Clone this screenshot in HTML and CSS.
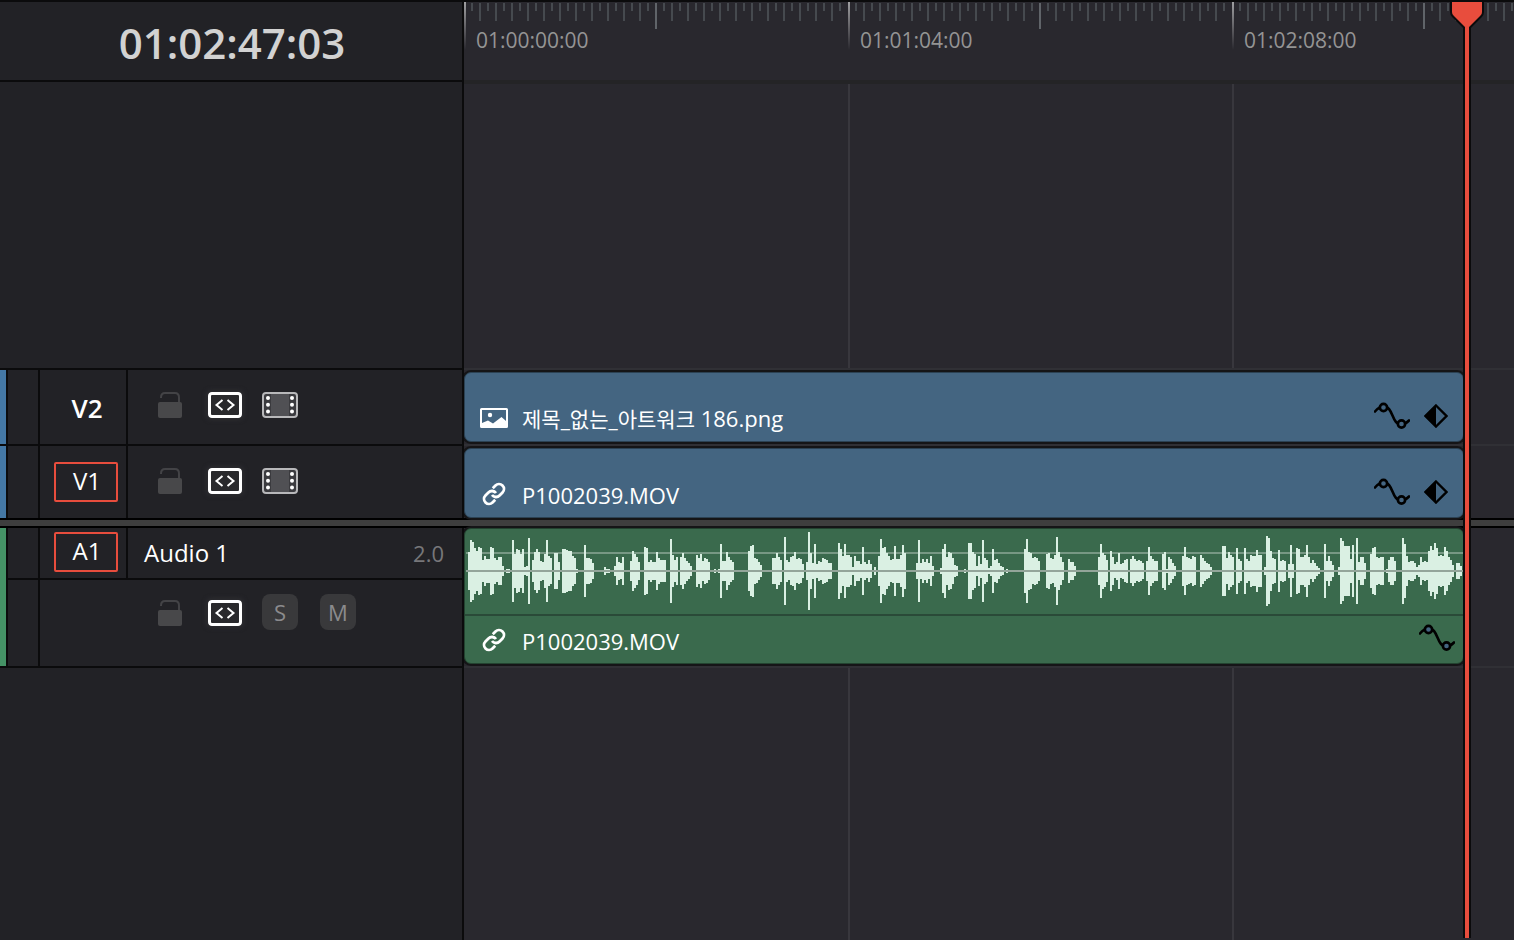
FILE: index.html
```
<!DOCTYPE html>
<html lang="ko">
  <head>
    <meta charset="UTF-8" />
    <meta name="viewport" content="width=device-width, initial-scale=1.0" />
    <title>Timeline</title>
    <link rel="stylesheet" href="styles.css">
  </head>
  <body>
    <!-- shared icons -->
    <svg class="icon-defs" width="0" height="0" aria-hidden="true">
      <symbol id="icon-lock" viewBox="0 0 24 26">
        <path d="M3 6V5.5C3 3 4.500 1 7 1H17C19.500 1 21 3 21 5.500V11" fill="none" stroke="#434346" stroke-width="2" />
        <rect x="0" y="10" width="24" height="16" rx="2" fill="#48484a" />
      </symbol>
      <symbol id="icon-select" viewBox="0 0 34 26">
        <rect x="1.500" y="1.500" width="31" height="23" rx="2.500" fill="#29292c" stroke="#fff" stroke-width="3" />
        <path d="M14.500 8L8.500 13L14.500 18M19.500 8L25.500 13L19.500 18" fill="none" stroke="#fff" stroke-width="2" />
      </symbol>
      <symbol id="icon-film" viewBox="0 0 36 26">
        <rect x="1" y="1" width="34" height="24" rx="3" fill="#3b3b3f" stroke="#b8b8ba" stroke-width="2" />
        <rect x="9" y="2" width="18" height="22" fill="#505054" />
        <g fill="#fff">
          <circle cx="6" cy="6" r="2" /><circle cx="6" cy="12.800" r="2" /><circle cx="6" cy="19.600" r="2" />
          <circle cx="30" cy="6" r="2" /><circle cx="30" cy="12.800" r="2" /><circle cx="30" cy="19.600" r="2" />
        </g>
      </symbol>
      <symbol id="icon-image" viewBox="0 0 28 20">
        <path fill="#fff" fill-rule="evenodd" d="M1.500 0H26.500Q28 0 28 1.500V18.500Q28 20 26.500 20H1.500Q0 20 0 18.500V1.500Q0 0 1.500 0ZM2 2V15L8 12.500L13 15.500L21.500 9L26 13V2Z" />
        <circle cx="10" cy="7" r="2.200" fill="#fff" />
      </symbol>
      <symbol id="icon-link" viewBox="0 0 24 24">
        <g fill="none" stroke="#fff" stroke-width="2.800">
          <path d="M10 13a5 5 0 0 0 7.540 .540l3-3a5 5 0 0 0-7.070-7.070l-2.700 2.700" />
          <path d="M14 11a5 5 0 0 0-7.540-.540l-3 3a5 5 0 0 0 7.070 7.070l2.700-2.700" />
        </g>
      </symbol>
      <symbol id="icon-curve" viewBox="0 0 36 28">
        <path d="M1 9.500C4 6 6 4.500 9.500 4.500C20 4.500 17 22.500 27.500 22.500C31 22.500 33 20.500 35 18.500" fill="none" stroke="#000" stroke-width="2.600" stroke-linecap="round" />
        <circle class="knot" cx="9.500" cy="5.500" r="3.600" stroke="#000" stroke-width="2.600" />
        <circle class="knot" cx="27.500" cy="22" r="3.600" stroke="#000" stroke-width="2.600" />
      </symbol>
      <symbol id="icon-keyframe" viewBox="0 0 24 24">
        <path d="M12 1.500L22.500 12L12 22.500L1.500 12Z" fill="none" stroke="#000" stroke-width="2.400" />
        <path d="M12 0.500V23.500L0.500 12Z" fill="#000" />
      </symbol>
    </svg>

    <main class="timeline">
      <header class="row header-row">
        <div class="panel timecode">01:02:47:03</div>
        <div class="ruler">
          <span>01:00:00:00</span>
          <span>01:01:04:00</span>
          <span>01:02:08:00</span>
        </div>
      </header>

      <div class="row spacer-top">
        <div class="panel"></div>
        <div class="lane-empty"></div>
      </div>

      <section class="row track track-v2">
        <div class="panel track-head video">
          <div class="gutter"></div>
          <div class="track-id"><strong>V2</strong></div>
          <div class="controls">
            <button class="icon-btn lock" aria-label="Lock V2"><svg width="24" height="26"><use href="#icon-lock" /></svg></button>
            <button class="icon-btn select" aria-label="Auto select V2"><svg width="34" height="26"><use href="#icon-select" /></svg></button>
            <button class="icon-btn" aria-label="Enable V2"><svg width="36" height="26"><use href="#icon-film" /></svg></button>
          </div>
        </div>
        <div class="lane">
          <div class="clip clip-video">
            <svg class="clip-icon" width="28" height="20"><use href="#icon-image" /></svg>
            <span class="clip-name"><span class="hangul">제목_없는_아트워크</span> 186.png</span>
            <button class="icon-btn" aria-label="Curves"><svg width="36" height="28"><use href="#icon-curve" /></svg></button>
            <button class="icon-btn" aria-label="Keyframes"><svg width="24" height="24"><use href="#icon-keyframe" /></svg></button>
          </div>
        </div>
      </section>

      <section class="row track track-v1">
        <div class="panel track-head video">
          <div class="gutter"></div>
          <div class="track-id"><button class="dest">V1</button></div>
          <div class="controls">
            <button class="icon-btn lock" aria-label="Lock V1"><svg width="24" height="26"><use href="#icon-lock" /></svg></button>
            <button class="icon-btn select" aria-label="Auto select V1"><svg width="34" height="26"><use href="#icon-select" /></svg></button>
            <button class="icon-btn" aria-label="Enable V1"><svg width="36" height="26"><use href="#icon-film" /></svg></button>
          </div>
        </div>
        <div class="lane">
          <div class="clip clip-video">
            <svg class="clip-icon" width="28" height="24"><use href="#icon-link" /></svg>
            <span class="clip-name">P1002039.MOV</span>
            <button class="icon-btn" aria-label="Curves"><svg width="36" height="28"><use href="#icon-curve" /></svg></button>
            <button class="icon-btn" aria-label="Keyframes"><svg width="24" height="24"><use href="#icon-keyframe" /></svg></button>
          </div>
        </div>
      </section>

      <div class="splitter"></div>

      <section class="row track track-a1">
        <div class="panel track-head audio">
          <div class="gutter"></div>
          <div class="track-id"><button class="dest">A1</button></div>
          <div class="track-name"><span>Audio 1</span><span class="channels">2.0</span></div>
          <div class="gutter"></div>
          <div class="controls">
            <button class="icon-btn lock" aria-label="Lock A1"><svg width="24" height="26"><use href="#icon-lock" /></svg></button>
            <button class="icon-btn select" aria-label="Auto select A1"><svg width="34" height="26"><use href="#icon-select" /></svg></button>
            <button class="toggle">S</button>
            <button class="toggle">M</button>
          </div>
        </div>
        <div class="lane">
          <div class="clip clip-audio">
            <svg class="waveform" viewBox="0 0 998 85" preserveAspectRatio="none">
              <rect class="level" x="1" y="23" width="997" height="2" />
              <path id="wave" />
              <rect class="middle" x="1" y="41" width="997" height="2" />
            </svg>
            <div class="clip-footer">
              <svg class="clip-icon" width="28" height="24"><use href="#icon-link" /></svg>
              <span class="clip-name">P1002039.MOV</span>
              <button class="icon-btn" aria-label="Curves"><svg width="36" height="28"><use href="#icon-curve" /></svg></button>
            </div>
          </div>
        </div>
      </section>

      <div class="row spacer-bottom">
        <div class="panel"></div>
        <div class="lane-empty"></div>
      </div>

      <div class="playhead">
        <svg width="34" height="30" viewBox="0 0 34 30">
          <path d="M2 0V10Q2 12 3.500 13.500L15 25V30H19V25L30.500 13.500Q32 12 32 10V0Z" fill="#e84d3d" stroke="#0b0b0c" stroke-width="4" paint-order="stroke" />
        </svg>
      </div>
    </main>

    <script>
      // peak values, one for every 2px of the clip
      const peaks = [
        19,31,29,23,20,24,23,11,15,12,12,24,23,13,11,14,14,5,1,2,2,0,31,17,22,21,17,22,4,5,33,0,11,19,22,19,10,9,17,31,
        15,13,0,18,18,9,0,22,22,21,20,20,15,13,2,1,0,0,26,13,13,12,8,0,0,0,0,0,4,2,2,0,0,5,14,9,8,14,0,0,
        0,10,20,17,14,9,0,0,24,23,9,11,9,9,19,13,11,11,11,0,0,32,16,11,14,0,14,18,13,10,8,5,0,0,16,13,17,10,13,12,
        9,0,1,2,1,2,27,10,10,19,14,11,9,0,0,0,0,0,0,0,20,25,26,13,12,9,6,0,1,1,0,0,13,13,18,14,11,0,34,11,
        9,14,15,19,12,13,12,7,0,9,39,18,8,27,7,10,9,13,12,11,8,8,0,1,1,28,22,15,27,16,16,14,4,15,10,10,7,24,9,7,
        11,7,0,4,0,15,32,23,24,18,15,11,12,25,12,12,16,26,18,0,0,0,0,0,8,31,8,12,9,12,8,15,5,0,1,1,3,22,27,14,
        19,18,13,6,5,0,0,1,2,0,28,28,19,17,5,15,7,31,13,11,3,5,22,11,12,8,5,4,0,2,1,1,1,0,0,0,0,0,22,32,
        19,18,13,14,13,10,0,0,0,17,18,13,12,16,34,19,14,9,1,0,12,9,9,5,1,1,1,0,0,0,0,0,0,0,0,14,27,18,16,11,
        0,20,14,7,9,18,7,8,11,12,0,12,15,12,10,11,10,8,0,10,24,15,12,10,10,0,0,17,19,2,14,12,8,5,0,0,0,15,24,14,
        13,12,15,14,0,0,16,13,10,8,7,4,1,0,1,0,0,25,25,13,19,16,14,0,23,12,10,0,23,12,10,16,15,15,21,16,16,0,4,35,
        33,20,13,12,0,21,10,11,10,0,7,26,7,0,23,22,14,14,16,26,14,8,11,8,5,3,1,0,27,10,15,10,6,0,1,4,33,30,25,25,
        25,12,26,0,33,9,14,14,8,0,0,17,23,24,14,13,14,14,0,2,11,14,14,10,0,1,0,33,27,15,9,10,10,8,4,6,14,9,10,9,
        20,25,21,28,23,15,16,15,24,20,14,11,6,0,8,8,5,1
      ];

      function drawWave() {
        let d = "";
        for (let i = 0; i < peaks.length; i++) {
          if (peaks[i] === 0) continue;
          const x = 3 + i * 2;
          d += `M${x} ${42 - peaks[i]}h2v${peaks[i] * 2}h-2z`;
        }
        document.getElementById("wave").setAttribute("d", d);
      }

      drawWave();
    </script>
  </body>
</html>
```
FILE: styles.css
```
* {
  box-sizing: border-box;
}
body {
  margin: 0;
  background-color: #29282e;
  color: #fff;
  font-family: "Open Sans", "Noto Sans", "Noto Sans CJK KR", sans-serif;
  font-size: 22px;
  line-height: 30px;
}
button {
  padding: 0;
  border: none;
  background: none;
  color: inherit;
  font: inherit;
  cursor: pointer;
}
svg {
  display: block;
}
.icon-defs {
  position: absolute;
}
.timeline {
  position: relative;
  display: flex;
  flex-direction: column;
  min-height: 100vh;
  border-top: 2px solid #0b0b0c;
  overflow: hidden;
}
.row {
  display: grid;
  grid-template-columns: 464px 1fr;
}
.panel {
  background-color: #222226;
  border-right: 2px solid #0b0b0c;
  border-bottom: 2px solid #0b0b0c;
}

/* header */
.header-row {
  height: 80px;
}
.timecode {
  padding: 11px 0 0 2px;
  text-align: center;
  color: #d2d2d2;
  font-size: 42px;
  font-weight: 600;
  line-height: 60px;
}
.ruler {
  display: flex;
  overflow: hidden;
  border-bottom: 2px solid #242426;
  background-image:
    linear-gradient(#29282e, #29282e),
    linear-gradient(90deg, #606469 2px, transparent 2px),
    linear-gradient(90deg, #464a4f 2px, transparent 2px),
    linear-gradient(90deg, #464a4f 2px, transparent 2px);
  background-size: 3px 48px, 384px 26px, 16px 18px, 16px 8px;
  background-position: 0 0, 191px 1px, 15px 1px, 7px 1px;
  background-repeat: no-repeat, repeat-x, repeat-x, repeat-x;
}
.ruler span {
  flex: 0 0 384px;
  padding: 23px 0 0 12px;
  background:
    linear-gradient(#a0a0a2, #29282e) no-repeat 0 0 / 2px 48px,
    linear-gradient(#29282e, #29282e) no-repeat 100% 0 / 1px 48px;
  color: #949494;
  font-size: 21px;
}

/* empty areas */
.lane-empty {
  background: linear-gradient(90deg, #38373d 2px, transparent 2px) 384px 0 / 384px 100%;
  background-repeat: repeat-x;
  box-shadow: inset 2px 0 #29282e;
}
.spacer-top {
  height: 288px;
}
.spacer-top .lane-empty {
  border-top: 2px solid #242426;
  border-bottom: 2px solid #303035;
}
.spacer-bottom {
  flex: 1;
}
.spacer-bottom .panel {
  border-bottom: none;
}

/* track headers */
.track-head {
  display: grid;
  grid-template-columns: 30px 86px 1fr;
  gap: 2px;
  padding-left: 8px;
  background: linear-gradient(90deg, #4478a5 6px, #0b0b0c 6px);
}
.track-head > div {
  background-color: #222226;
}
.track-head.audio {
  grid-template-rows: 50px 86px;
  background: linear-gradient(90deg, #459366 6px, #0b0b0c 6px);
}
.track-head.audio .controls {
  grid-column: 2 / 4;
  padding: 14px 0 0 118px;
}
.track-id {
  display: flex;
  align-items: center;
  justify-content: center;
  padding-left: 6px;
  font-size: 24px;
}
.track-id strong {
  padding: 2px 0 0 2px;
  font-size: 26px;
  font-weight: 600;
}
.dest {
  width: 64px;
  height: 40px;
  padding: 0 0 2px 2px;
  border: 2px solid #e84d3d;
  border-radius: 2px;
}
.audio .track-id {
  align-items: flex-start;
  padding-top: 4px;
}
.track-name {
  display: flex;
  align-items: center;
  justify-content: space-between;
  padding: 0 18px 0 16px;
  font-size: 24px;
}
.channels {
  color: #77777a;
  font-size: 22px;
}
.controls {
  display: flex;
  align-items: flex-start;
  gap: 20px;
  padding: 22px 0 0 30px;
}
.controls .icon-btn {
  height: 26px;
}
.audio .icon-btn {
  margin-top: 6px;
}
.lock {
  width: 30px;
}
.select svg {
  border-radius: 3px;
  box-shadow: 0 0 4px 2px #2c2c30;
}
.toggle {
  width: 36px;
  height: 36px;
  border-radius: 8px;
  background-color: #39393b;
  color: #8b8b8d;
  font-weight: 500;
}
.toggle + .toggle {
  margin-left: 2px;
}

/* lanes and clips */
.track-v2 {
  height: 76px;
}
.track-v1 {
  height: 72px;
}
.track-v1 .panel {
  border-bottom: none;
}
.track-v2 .lane {
  border-bottom: 2px solid #303035;
}
.track-a1 {
  height: 140px;
}
.track-a1 .lane {
  border-bottom: 2px solid #303035;
}
.lane {
  padding-top: 2px;
}
.track-a1 .lane {
  padding-top: 0;
}
.clip {
  width: 1000px;
  border: 1px solid #2c4253;
  border-radius: 7px;
  box-shadow: 0 0 0 2px #151517;
  clip-path: inset(-2px -2px -2px 0);
}
.clip-video {
  display: flex;
  align-items: center;
  height: 70px;
  padding: 20px 15px 0 15px;
  background-color: #446581;
}
.clip-icon {
  flex: none;
  margin: 2px 14px 0 0;
}
.clip-name {
  flex: 1;
  padding-top: 3px;
}
.hangul {
  font-size: 21px;
}
.clip .icon-btn {
  margin: 0 0 2px 14px;
}
.knot {
  fill: #446581;
}
.clip-audio {
  height: 136px;
  border-color: #234330;
  background-color: #3a6a4d;
}
.clip-audio .knot {
  fill: #3a6a4d;
}
.waveform {
  width: 100%;
  height: 85px;
}
.waveform path {
  fill: #daf0e3;
}
.waveform .level {
  fill: #ffffff50;
}
.waveform .middle {
  fill: #93a59a;
}
.clip-footer {
  display: flex;
  align-items: center;
  height: 48px;
  padding: 0 8px 0 15px;
  border-top: 2px solid #2a4a38;
}
.splitter {
  height: 10px;
  border: solid #000;
  border-width: 2px 0;
  background-color: #3e3e3e;
}

/* playhead lies over all lanes */
.playhead {
  position: absolute;
  top: 0;
  bottom: 2px;
  left: 1463px;
  width: 8px;
  border: solid #0b0b0c;
  border-width: 0 2px;
  background-color: #e84d3d;
}
.playhead svg {
  margin-left: -15px;
}
```
